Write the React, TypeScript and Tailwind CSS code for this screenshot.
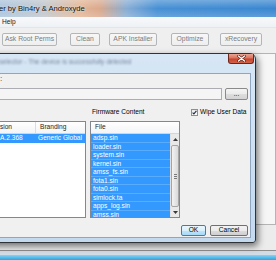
import React from "react";

const files = [
  "adsp.sin",
  "loader.sin",
  "system.sin",
  "kernel.sin",
  "amss_fs.sin",
  "fota1.sin",
  "fota0.sin",
  "simlock.ta",
  "apps_log.sin",
  "amss.sin",
];

function ToolBtn({ w, ml, children }: { w: string; ml: string; children: React.ReactNode }) {
  return (
    <div
      className={`${w} ${ml} h-[13px] shrink-0 flex items-center justify-center rounded-[2px] border border-[#b3b6b9] bg-[linear-gradient(180deg,#f7f7f7_0%,#eeeeee_100%)] text-[#7d7d7d] text-[6.8px]`}
    >
      {children}
    </div>
  );
}

export default function App() {
  return (
    <div className="relative w-[276px] h-[260px] overflow-hidden bg-[#f0f0f0] font-['Liberation_Sans',Arial,sans-serif] text-[6.6px] leading-none text-black">
      {/* main window */}
      <div className="flex flex-col h-full">
        <div className="h-[17px] shrink-0 flex items-center bg-[linear-gradient(180deg,rgba(255,255,255,0.28)_0%,rgba(255,255,255,0)_50%,rgba(255,255,255,0.18)_100%),linear-gradient(90deg,#a9c3dc_0%,#c0c6cc_16%,#e3b595_29%,#dba98c_36%,#86acd4_46%,#4690d4_57%,#3a87d0_100%)]">
          <span className="ml-[-1px] mt-[1px] text-[7.6px] text-[#111] [text-shadow:0_0_3px_rgba(255,255,255,0.9)]">er by Bin4ry &amp; Androxyde</span>
        </div>
        <div className="h-[11px] shrink-0 flex items-center bg-[linear-gradient(180deg,#f8f9fb_0%,#eef1f5_100%)] border-b border-[#e2e5ea]">
          <span className="ml-[2px] text-[#222]">Help</span>
        </div>
        <div className="h-[22px] shrink-0 flex items-start pt-[5px] bg-[#efefef]">
          <ToolBtn w="w-[55px]" ml="ml-[2px]">Ask Root Perms</ToolBtn>
          <ToolBtn w="w-[30px]" ml="ml-[13px]">Clean</ToolBtn>
          <ToolBtn w="w-[48px]" ml="ml-[9px]">APK Installer</ToolBtn>
          <ToolBtn w="w-[38px]" ml="ml-[14px]">Optimize</ToolBtn>
          <ToolBtn w="w-[42px]" ml="ml-[11px]">xRecovery</ToolBtn>
        </div>
        <div className="h-[3px] shrink-0 bg-[#efefef]" />
        <div className="h-[172px] shrink-0 border border-[#b4b4b4] bg-[#f6f6f6]" />
        <div className="h-[25px] shrink-0 bg-[#ececec]" />
        <div className="h-[1px] shrink-0 bg-[#8e8e8e]" />
        <div className="h-[4px] shrink-0 bg-[#d3dce5]" />
        <div className="h-[5px] shrink-0 bg-[linear-gradient(180deg,#86d3f3_0%,#2ea4df_100%)]" />
      </div>

      {/* dialog window */}
      <div className="absolute left-[-100px] top-[53px] w-[356px] h-[190px] flex flex-col rounded-t-[6px] rounded-b-[3px] border border-[#2f3338] bg-[linear-gradient(180deg,#d6e6f5_0%,#c4d9ee_100%)] shadow-[2px_3px_7px_rgba(0,0,0,0.55)]">
        <div className="h-[19px] shrink-0 flex items-start justify-between">
          <span className="ml-[69px] mt-[5px] text-[6.6px] text-[#5d6f86] blur-[1.2px] opacity-80">
            Firmware selector - The device is successfully detected
          </span>
          <div className="mr-[1px] w-[26px] h-[10px] flex items-center justify-center rounded-b-[3px] border border-t-0 border-[#6e261c] bg-[linear-gradient(180deg,#eaa493_0%,#d9755f_45%,#c7432c_55%,#d2634a_100%)]">
            <svg width="9" height="7" viewBox="0 0 9 7">
              <path d="M1.5 1 L7.5 6 M7.5 1 L1.5 6" stroke="#5a1a10" strokeWidth="2.6" strokeLinecap="round" />
              <path d="M1.5 1 L7.5 6 M7.5 1 L1.5 6" stroke="#ffffff" strokeWidth="1.4" strokeLinecap="round" />
            </svg>
          </div>
        </div>
        <div className="flex-1 flex px-[4px] pb-[4px]">
          <div className="flex-1 flex flex-col border border-[#8ea6bf] bg-[#f0f0f0]">
            {/* row 1 */}
            <div className="h-[10px] flex items-center">
              <div className="w-[96px] text-right">Source folder :</div>
            </div>
            {/* row 2 */}
            <div className="mt-[4px] h-[12px] flex">
              <div className="ml-[4px] flex-1 border border-[#abadb3] bg-[#f5f5f5]" />
              <div className="ml-[3px] mr-[2px] w-[23px] flex items-center justify-center rounded-[2px] border border-[#8a8a8a] bg-[linear-gradient(180deg,#f4f4f4_0%,#ebebeb_50%,#dddddd_51%,#d3d3d3_100%)]">
                ...
              </div>
            </div>
            {/* row 3 */}
            <div className="mt-[7px] h-[10px] flex items-center">
              <div className="w-[186px]" />
              <div className="w-[99px]">Firmware Content</div>
              <div className="w-[7px] h-[7px] flex items-center justify-center border border-[#8e8f8f] bg-[linear-gradient(180deg,#e8e8e8_0%,#ffffff_100%)]">
                <svg width="5" height="5" viewBox="0 0 5 5">
                  <path d="M0.6 2.6 L1.9 3.9 L4.4 0.9" stroke="#1c2a44" strokeWidth="1.1" fill="none" />
                </svg>
              </div>
              <div className="ml-[2px]">Wipe User Data</div>
            </div>
            {/* row 4 */}
            <div className="mt-[4px] h-[97px] flex">
              {/* firmwares table */}
              <div className="ml-[4px] w-[176px] flex flex-col border border-[#828790] bg-white">
                <div className="h-[12px] shrink-0 flex border-b border-[#d5d5d5] bg-[linear-gradient(180deg,#ffffff_0%,#f3f4f6_100%)] text-[#1e1e1e]">
                  <div className="w-[76px] border-r border-[#dcdcdc]" />
                  <div className="w-[49px] flex items-center pl-[3px] border-r border-[#dcdcdc]">Version</div>
                  <div className="flex-1 flex items-center pl-[4px]">Branding</div>
                </div>
                <div className="h-[9px] flex bg-[#3399ff] text-white">
                  <div className="w-[76px]" />
                  <div className="w-[49px] flex items-center pl-[2px]">4.0.A.2.368</div>
                  <div className="flex-1 flex items-center pl-[2px]">Generic Global</div>
                </div>
              </div>
              {/* file list */}
              <div className="ml-[4px] w-[90px] flex flex-col border border-[#828790] bg-white">
                <div className="h-[12px] shrink-0 flex items-center pl-[4px] border-b border-[#d5d5d5] bg-[linear-gradient(180deg,#ffffff_0%,#f3f4f6_100%)] text-[#1e1e1e]">
                  File
                </div>
                <div className="flex-1 flex min-h-0">
                  <div className="w-[79px] flex flex-col overflow-hidden">
                    {files.map((f) => (
                      <div
                        key={f}
                        className="h-[8.5px] shrink-0 flex items-center pl-[2px] pt-[2px] bg-[#3399ff] border-b border-[#5aacff] text-white"
                      >
                        {f}
                      </div>
                    ))}
                  </div>
                  <div className="w-[9px] flex flex-col bg-[#e8e8e8] border-l border-[#e0e0e0]">
                    <div className="h-[10px] shrink-0 flex items-center justify-center">
                      <svg width="5" height="3" viewBox="0 0 5 3">
                        <path d="M0 3 L2.5 0 L5 3 Z" fill="#3a3a3a" />
                      </svg>
                    </div>
                    <div className="mt-[1px] h-[62px] shrink-0 flex items-center justify-center rounded-[2px] border border-[#a5a5a5] bg-[linear-gradient(90deg,#f3f3f3_0%,#e6e6e6_50%,#d9d9d9_100%)]">
                      <div className="flex flex-col gap-[1px]">
                        <div className="w-[3px] h-[1px] bg-[#7a7a7a]" />
                        <div className="w-[3px] h-[1px] bg-[#7a7a7a]" />
                        <div className="w-[3px] h-[1px] bg-[#7a7a7a]" />
                      </div>
                    </div>
                    <div className="flex-1 flex items-center justify-center">
                      <svg width="5" height="3" viewBox="0 0 5 3">
                        <path d="M0 0 L2.5 3 L5 0 Z" fill="#3a3a3a" />
                      </svg>
                    </div>
                  </div>
                </div>
              </div>
            </div>
            {/* row 5 */}
            <div className="mt-[7px] h-[11px] flex justify-end">
              <div className="w-[25px] flex items-center justify-center rounded-[2px] border border-[#3c7fb1] bg-[linear-gradient(180deg,#eaf6fd_0%,#d9f0fc_50%,#bee6fd_51%,#a7d9f5_100%)]">
                OK
              </div>
              <div className="ml-[4px] mr-[2px] w-[38px] flex items-center justify-center rounded-[2px] border border-[#707070] bg-[linear-gradient(180deg,#f2f2f2_0%,#ebebeb_50%,#dddddd_51%,#cfcfcf_100%)]">
                Cancel
              </div>
            </div>
          </div>
        </div>
      </div>
    </div>
  );
}
